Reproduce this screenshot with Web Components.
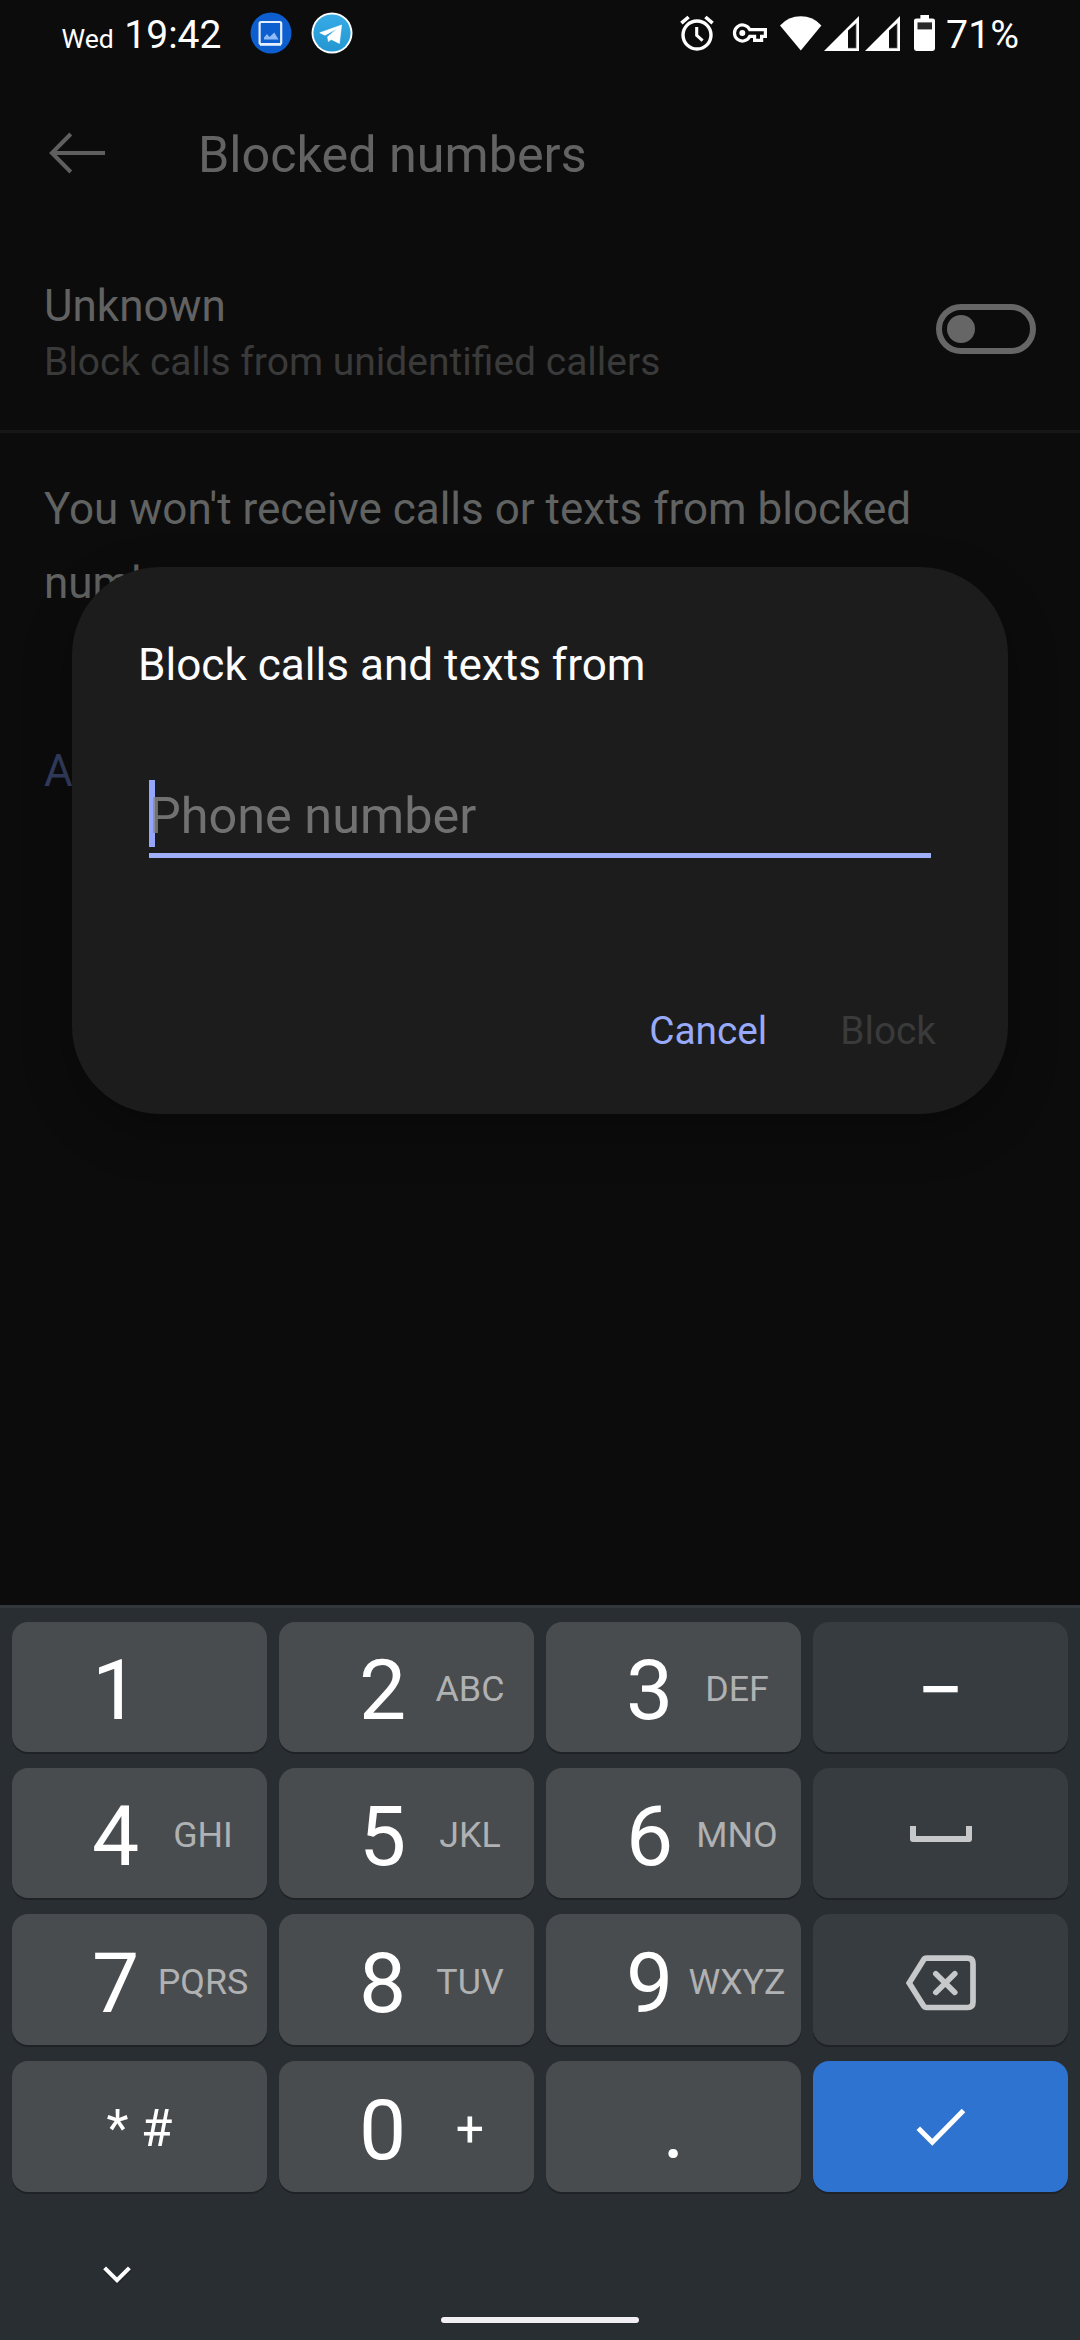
<!DOCTYPE html>
<html lang="en">
<head>
<meta charset="utf-8">
<title>Blocked numbers</title>
<style>
html,body{margin:0;background:#0c0c0c}
body{width:1080px;height:2340px;overflow:hidden;font-family:Roboto,"Noto Sans",sans-serif}
</style>
</head>
<body>
<phone-screen>
  <status-bar slot="status" day="Wed" time="19:42" battery="71%"></status-bar>
  <app-header slot="page">Blocked numbers</app-header>
  <toggle-row slot="page">Unknown<span slot="summary">Block calls from unidentified callers</span></toggle-row>
  <blocked-info slot="page">You won't receive calls or texts from blocked numbers<span slot="action">Add</span></blocked-info>
  <block-dialog slot="dialog" placeholder="Phone number">Block calls and texts from
    <span slot="cancel">Cancel</span><span slot="confirm">Block</span>
  </block-dialog>
  <num-pad slot="keyboard">
    <num-key digit="1"></num-key>
    <num-key digit="2">ABC</num-key>
    <num-key digit="3">DEF</num-key>
    <num-key kind="func"><span class="minus">−</span></num-key>
    <num-key digit="4">GHI</num-key>
    <num-key digit="5">JKL</num-key>
    <num-key digit="6">MNO</num-key>
    <num-key kind="icon"><ui-icon name="space"></ui-icon></num-key>
    <num-key digit="7">PQRS</num-key>
    <num-key digit="8">TUV</num-key>
    <num-key digit="9">WXYZ</num-key>
    <num-key kind="icon"><ui-icon name="backspace"></ui-icon></num-key>
    <num-key kind="symbols">* #</num-key>
    <num-key digit="0" kind="zero">+</num-key>
    <num-key kind="dot">.</num-key>
    <num-key kind="enter"><ui-icon name="check"></ui-icon></num-key>
  </num-pad>
</phone-screen>
<script>
const define = (name, render) => customElements.define(name, class extends HTMLElement {
  constructor(){ super(); this.attachShadow({mode:'open'}); }
  connectedCallback(){ this.shadowRoot.innerHTML = render(this); }
});

// name: [width, height, markup]
const ICONS = {
  gallery:[42,42,`<circle cx="21" cy="21" r="20.5" fill="#0d5fd0"/><rect x="9.6" y="10" width="21.6" height="22" rx="1.5" fill="none" stroke="#e4efff" stroke-width="2.2"/><path d="M10 32.6H31" stroke="#e4efff" stroke-width="2.4"/><path d="M14 27.5V25.5L17 22L19.5 25L24.3 20.5L28.5 27.5Z" fill="#8fbcf6"/>`],
  telegram:[42,42,`<defs><linearGradient id="g" x1="0" y1="0" x2="0" y2="1"><stop offset="0" stop-color="#36abe6"/><stop offset="1" stop-color="#2497d3"/></linearGradient></defs><circle cx="21" cy="21" r="20.5" fill="#fff"/><circle cx="21" cy="21" r="18.6" fill="url(#g)"/><path d="M8.8 20.8L30.6 13L28.4 31.4L20.2 27.4L17.4 29.6L16.6 24.8L26.4 16.6L14 23.2Z" fill="#fff" stroke="#fff" stroke-width=".6" stroke-linejoin="round"/>`],
  alarm:[34,36,`<circle cx="17" cy="20" r="14" fill="none" stroke="#fff" stroke-width="3.4"/><path d="M16.7 12V20.3L22.6 25.6" fill="none" stroke="#fff" stroke-width="3.1"/><path d="M1.4 8.2L8.6 2M32.6 8.2L25.4 2" stroke="#fff" stroke-width="3.6"/>`],
  key:[36,22,`<path d="M17.7 7.6H33.4V14.4H29.6V18.4H22.6V14.4H17.7A8 8 0 1 1 17.7 7.6Z" fill="none" stroke="#fff" stroke-width="3.2"/><circle cx="10.3" cy="11" r="3" fill="#fff"/>`],
  wifi:[42,35,`<path d="M0 9.4Q8.5 .3 20.8 .3T41.4 9.4L20.8 34.6Z" fill="#fff"/>`],
  signal:[35,35,`<path d="M0 35L35 0V35Z" fill="#fff"/><path d="M24 14.6L32.2 7.2V32H24Z" fill="#0c0c0c"/><path d="M32.3 7V32.3H24" fill="none" stroke="#aaa" stroke-width=".8"/>`],
  battery:[21,36,`<path d="M6.4 0H15V3.4H18.6Q21 3.4 21 5.6V33.6Q21 36 18.6 36H2.4Q0 36 0 33.6V5.6Q0 3.4 2.4 3.4H6.4Z" fill="#fff"/><rect x="3.5" y="7.4" width="14.5" height="7" fill="#2a2a2a"/>`],
  back:[56,42,`<path d="M55 21H3M20.8 2L1.9 21L20.8 40" fill="none" stroke="#5f5f5f" stroke-width="4"/>`],
  space:[62,18,`<path d="M3 2V15H59V2" fill="none" stroke="#c6c8ca" stroke-width="6" stroke-linejoin="round"/>`],
  backspace:[70,62,`<path transform="translate(0 6)" d="M20.5 3.2H61.5Q67 3.2 67 8.7V47Q67 52.5 61.5 52.5H20.5Q18.6 52.5 17.5 50.8L3.2 27.9L17.5 4.9Q18.6 3.2 20.5 3.2Z" fill="none" stroke="#c6c8ca" stroke-width="5.7"/><path transform="translate(0 6)" d="M29.8 18.8L48.8 37.4M48.8 18.8L29.8 37.4" stroke="#c6c8ca" stroke-width="5.6" stroke-linecap="round"/>`],
  check:[50,38,`<path d="M2.3 20.2L16.3 34.2L47.5 2.6" fill="none" stroke="#fff" stroke-width="5"/>`],
  chevron:[28,18,`<path d="M1.6 2.8L14 15.2L26.4 2.8" fill="none" stroke="#1b1f22" stroke-width="4" transform="translate(0 1)" opacity=".5"/><path d="M1.6 1.8L14 14.2L26.4 1.8" fill="none" stroke="#fff" stroke-width="4"/>`]
};
define('ui-icon', el => {
  const [w,h,body] = ICONS[el.getAttribute('name')];
  return `<style>:host{display:block;flex:none;width:${w}px;height:${h}px}svg{display:block;overflow:visible}</style>
  <svg width="${w}" height="${h}" viewBox="0 0 ${w} ${h}">${body}</svg>`;
});

define('phone-screen', () => `<style>
  :host{display:flex;flex-direction:column;position:relative;width:1080px;height:2340px;background:#0c0c0c}
  main{flex:1;min-height:0;overflow:hidden}
  .overlay{position:absolute;left:72px;top:566.5px}
  </style><slot name="status"></slot><main><slot name="page"></slot></main>
  <slot name="keyboard"></slot><div class="overlay"><slot name="dialog"></slot></div>`);

define('status-bar', el => `<style>
  :host{display:flex;align-items:center;justify-content:space-between;height:66px;padding:0 61px 0 61.5px;color:#fff}
  .left,.right{display:flex;align-items:center;height:66px}
  .clock{display:flex;align-items:baseline;gap:10.5px;margin:7px 28.5px 0 0;line-height:50px}
  .day{font-size:26.6px}.time{font-size:39px}
  .pct{font-size:39.3px;line-height:50px;margin:3px 0 0 11px}
  .tg{margin-left:19px}
  .key{margin-left:18px}.wifi{margin-left:12px}.s1{margin-left:2px}.s2{margin-left:6px}.bat{margin-left:14px}
  </style>
  <div class="left"><div class="clock"><span class="day">${el.getAttribute('day')}</span><span class="time">${el.getAttribute('time')}</span></div>
  <ui-icon name="gallery"></ui-icon><ui-icon class="tg" name="telegram"></ui-icon></div>
  <div class="right"><ui-icon name="alarm"></ui-icon><ui-icon class="key" name="key"></ui-icon><ui-icon class="wifi" name="wifi"></ui-icon>
  <ui-icon class="s1" name="signal"></ui-icon><ui-icon class="s2" name="signal"></ui-icon><ui-icon class="bat" name="battery"></ui-icon>
  <span class="pct">${el.getAttribute('battery')}</span></div>`);

define('app-header', () => `<style>
  :host{display:flex;align-items:center;height:174px;padding-left:50px;gap:92px;color:#636363}
  .title{font-size:50.3px;line-height:60px;margin-top:4px}
  </style><ui-icon name="back"></ui-icon><div class="title"><slot></slot></div>`);

define('toggle-row', () => `<style>
  :host{display:flex;justify-content:space-between;align-items:flex-start;box-sizing:border-box;height:193px;padding:38px 44px 0;border-bottom:3px solid #171717}
  .title{font-size:44px;line-height:56px;color:#626262}
  .sub{font-size:39px;line-height:56px;color:#3a3a3a}
  .switch{display:flex;align-items:center;box-sizing:border-box;width:100px;height:50px;margin-top:26px;border:6px solid #666;border-radius:25px;padding-left:5px}
  .knob{width:28px;height:28px;border-radius:50%;background:#666}
  </style><div><div class="title"><slot></slot></div><div class="sub"><slot name="summary"></slot></div></div>
  <div class="switch"><div class="knob"></div></div>`);

define('blocked-info', () => `<style>
  :host{display:block;padding:39px 44px 0;font-size:44px}
  p{margin:0;line-height:74px;color:#616262}
  .action{margin-top:125px;line-height:52px;color:#333d60}
  </style><p><slot></slot></p><div class="action"><slot name="action"></slot></div>`);

define('block-dialog', el => `<style>
  :host{display:flex;flex-direction:column;box-sizing:border-box;width:936px;height:547.5px;padding:68.5px 72px 0 66px;border-radius:88px;background:#1c1c1c;box-shadow:0 18px 50px rgba(0,0,0,.28)}
  h1{margin:0;font-size:44.1px;font-weight:400;line-height:60px;color:#fdfdff}
  .field{position:relative;box-sizing:border-box;width:782px;height:78px;margin:85px 0 0 11px;padding-top:3px;border-bottom:5px solid #9faffa}
  .hint{position:relative;font-size:50.4px;line-height:66px;color:rgba(135,135,135,.8)}
  .cursor{position:absolute;left:0;top:0;width:6px;height:67px;background:#95a5fb}
  .buttons{display:flex;justify-content:flex-end;gap:73px;margin-top:148px;font-size:38.8px;line-height:50px}
  .cancel{color:#98aafa}.confirm{color:#3a3a3a}
  </style><h1><slot></slot></h1>
  <div class="field"><div class="cursor"></div><div class="hint">${el.getAttribute('placeholder')}</div></div>
  <div class="buttons"><span class="cancel"><slot name="cancel"></slot></span><span class="confirm"><slot name="confirm"></slot></span></div>`);

define('num-pad', () => `<style>
  :host{display:flex;flex-direction:column;box-sizing:border-box;height:735px;padding:14px 12px 17px;border-top:3px solid #32373b;background:#292e32}
  .keys{display:grid;grid-template-columns:repeat(4,255px);grid-template-rows:130px 130px 131px 131px;gap:16px 12px}
  .nav{display:flex;flex-direction:column;justify-content:space-between;flex:1;padding:74px 0 0 91px}
  .home{width:198px;height:6.5px;border-radius:3px;background:#efeff4;margin-left:338px}
  </style><div class="keys"><slot></slot></div>
  <div class="nav"><ui-icon name="chevron"></ui-icon><div class="home"></div></div>`);

define('num-key', el => {
  const digit = el.getAttribute('digit');
  return `<style>
  :host{display:flex;align-items:center;justify-content:center;border-radius:16px;background:#494c4e;box-shadow:0 2px 0 #1f2326;color:#fff;font-size:84px;line-height:96px}
  :host([kind=func]),:host([kind=icon]){background:#373c40}
  :host([kind=enter]){background:#2e73cf}
  :host([digit]){display:grid;grid-template-columns:80px 47px 1fr}
  .digit{grid-column:2;margin-top:8px}
  .label{text-align:center;font-size:35.8px;line-height:50px;color:#afb1b2;margin-top:4px}
  :host([kind=zero]) .label{font-size:50px;color:#fff}
  :host([kind=symbols]){font-size:51px}
  :host([kind=symbols]) .text{padding-top:5px}
  :host([kind=func]) .text,:host([kind=dot]) .text{padding-top:7px}
  </style>` + (digit !== null
    ? `<span class="digit">${digit}</span><span class="label"><slot></slot></span>`
    : `<span class="text"><slot></slot></span>`);
});
</script>
</body>
</html>
